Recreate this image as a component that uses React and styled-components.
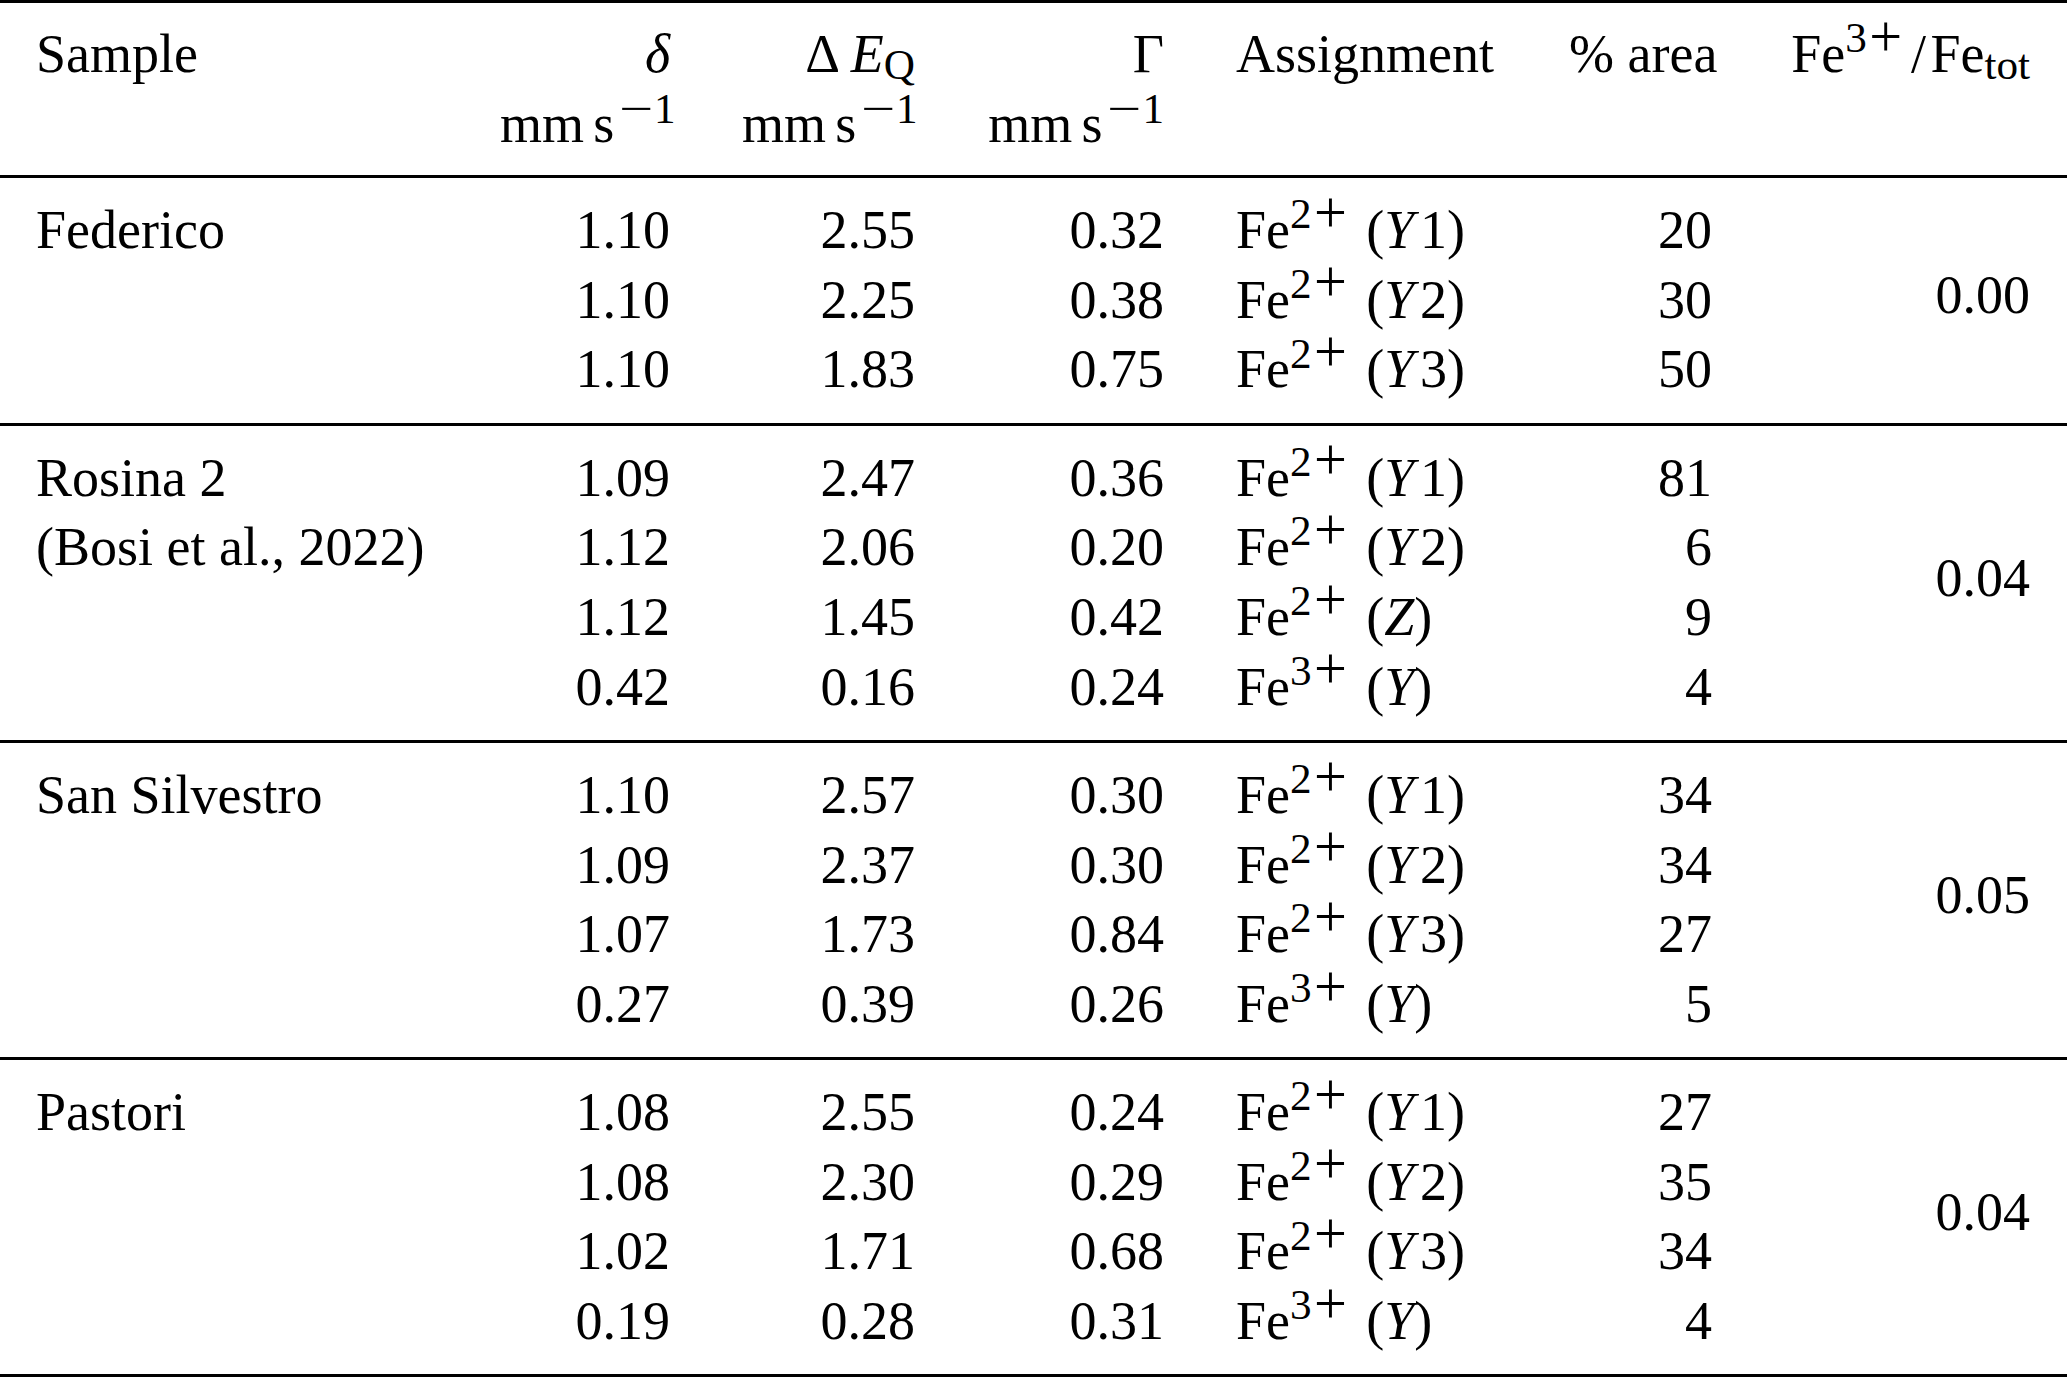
import React from 'react';
import styled, { createGlobalStyle } from 'styled-components';

const GlobalStyle = createGlobalStyle`
  html, body {
    margin: 0;
    padding: 0;
    background: #fff;
  }
  body {
    font-family: 'Liberation Serif', 'Times New Roman', serif;
    color: #000;
  }
`;

const COLS = '392px 170px 173px 177px 261px 143px 246px';

const Table = styled.div`
  width: 2067px;
  font-size: 54px;
  line-height: 69.7px;
`;

const Head = styled.div`
  display: grid;
  grid-template-columns: ${COLS};
  grid-auto-rows: 70px;
  column-gap: 72px;
  padding: 17px 37px 15px 36px;
  border-top: 3px solid #000;
`;

const Group = styled.div`
  display: grid;
  grid-template-columns: ${COLS};
  grid-auto-rows: 69.7px;
  column-gap: 72px;
  padding: 18px 37px 17.5px 36px;
  border-top: 3px solid #000;
  border-bottom: ${(p) => (p.$last ? '3px solid #000' : 'none')};
`;

const Cell = styled.div`
  grid-column: ${(p) => p.$col};
  text-align: ${(p) => p.$align || 'right'};
  white-space: nowrap;
`;

const Ratio = styled.div`
  grid-column: 7;
  grid-row: ${(p) => `1 / span ${p.$span}`};
  align-self: center;
  text-align: right;
  padding-bottom: 9px;
`;

const I = styled.span`
  font-style: italic;
`;

// superscript / subscript as in the typeset table (large script size)
const Sup = styled.span`
  font-size: 0.8em;
  vertical-align: ${(p) => p.$raise || '0.46em'};
  line-height: 0;
`;

const Sub = styled.span`
  font-size: 0.8em;
  vertical-align: -0.17em;
  line-height: 0;
`;

// math plus, wider than the text glyph
const Plus = styled.span`
  font-size: 1.35em;
  position: relative;
  top: 0.06em;
  margin: 0 0.1em 0 0.04em;
  line-height: 0;
`;

// math minus: stretched sideways, kept at script height
const Minus = styled.span`
  display: inline-block;
  line-height: 0;
  margin: 0 0.14em 0 0.22em;
  transform: scaleX(1.4);
`;

const Slash = styled.span`
  margin: 0 0.08em 0 0.06em;
`;

const Thin = styled.span`
  display: inline-block;
  width: ${(p) => p.$w || '0.17em'};
`;

const Unit = () => (
  <>
    mm<Thin />s<Sup $raise="0.44em"><Minus>−</Minus>1</Sup>
  </>
);

const Fe = ({ ox }) => (
  <>
    Fe<Sup>{ox}<Plus>+</Plus></Sup>
  </>
);

const Site = ({ site, n }) => (
  <>
    (<I>{site}</I>
    {n && <Thin $w="0.11em" />}
    {n})
  </>
);

const groups = [
  {
    sample: ['Federico'],
    ratio: '0.00',
    rows: [
      ['1.10', '2.55', '0.32', 2, 'Y', '1', '20'],
      ['1.10', '2.25', '0.38', 2, 'Y', '2', '30'],
      ['1.10', '1.83', '0.75', 2, 'Y', '3', '50'],
    ],
  },
  {
    sample: ['Rosina 2', '(Bosi et al., 2022)'],
    ratio: '0.04',
    rows: [
      ['1.09', '2.47', '0.36', 2, 'Y', '1', '81'],
      ['1.12', '2.06', '0.20', 2, 'Y', '2', '6'],
      ['1.12', '1.45', '0.42', 2, 'Z', '', '9'],
      ['0.42', '0.16', '0.24', 3, 'Y', '', '4'],
    ],
  },
  {
    sample: ['San Silvestro'],
    ratio: '0.05',
    rows: [
      ['1.10', '2.57', '0.30', 2, 'Y', '1', '34'],
      ['1.09', '2.37', '0.30', 2, 'Y', '2', '34'],
      ['1.07', '1.73', '0.84', 2, 'Y', '3', '27'],
      ['0.27', '0.39', '0.26', 3, 'Y', '', '5'],
    ],
  },
  {
    sample: ['Pastori'],
    ratio: '0.04',
    rows: [
      ['1.08', '2.55', '0.24', 2, 'Y', '1', '27'],
      ['1.08', '2.30', '0.29', 2, 'Y', '2', '35'],
      ['1.02', '1.71', '0.68', 2, 'Y', '3', '34'],
      ['0.19', '0.28', '0.31', 3, 'Y', '', '4'],
    ],
  },
];

export default function App() {
  return (
    <>
      <GlobalStyle />
      <Table>
        <Head>
          <Cell $col={1} $align="left">Sample</Cell>
          <Cell $col={2}><I>δ</I></Cell>
          <Cell $col={3}>Δ<Thin $w="0.2em" /><I>E</I><Sub>Q</Sub></Cell>
          <Cell $col={4}>Γ</Cell>
          <Cell $col={5} $align="left">Assignment</Cell>
          <Cell $col={6}>% area</Cell>
          <Cell $col={7}>
            <Fe ox={3} /><Slash>/</Slash>Fe<Sub>tot</Sub>
          </Cell>
          <Cell $col={2}><Unit /></Cell>
          <Cell $col={3}><Unit /></Cell>
          <Cell $col={4}><Unit /></Cell>
        </Head>
        {groups.map((g, gi) => (
          <Group key={g.sample[0]} $last={gi === groups.length - 1}>
            {g.rows.map((r, ri) => (
              <React.Fragment key={ri}>
                <Cell $col={1} $align="left">{g.sample[ri] || ''}</Cell>
                <Cell $col={2}>{r[0]}</Cell>
                <Cell $col={3}>{r[1]}</Cell>
                <Cell $col={4}>{r[2]}</Cell>
                <Cell $col={5} $align="left">
                  <Fe ox={r[3]} /> <Site site={r[4]} n={r[5]} />
                </Cell>
                <Cell $col={6}>{r[6]}</Cell>
              </React.Fragment>
            ))}
            <Ratio $span={g.rows.length}>{g.ratio}</Ratio>
          </Group>
        ))}
      </Table>
    </>
  );
}
